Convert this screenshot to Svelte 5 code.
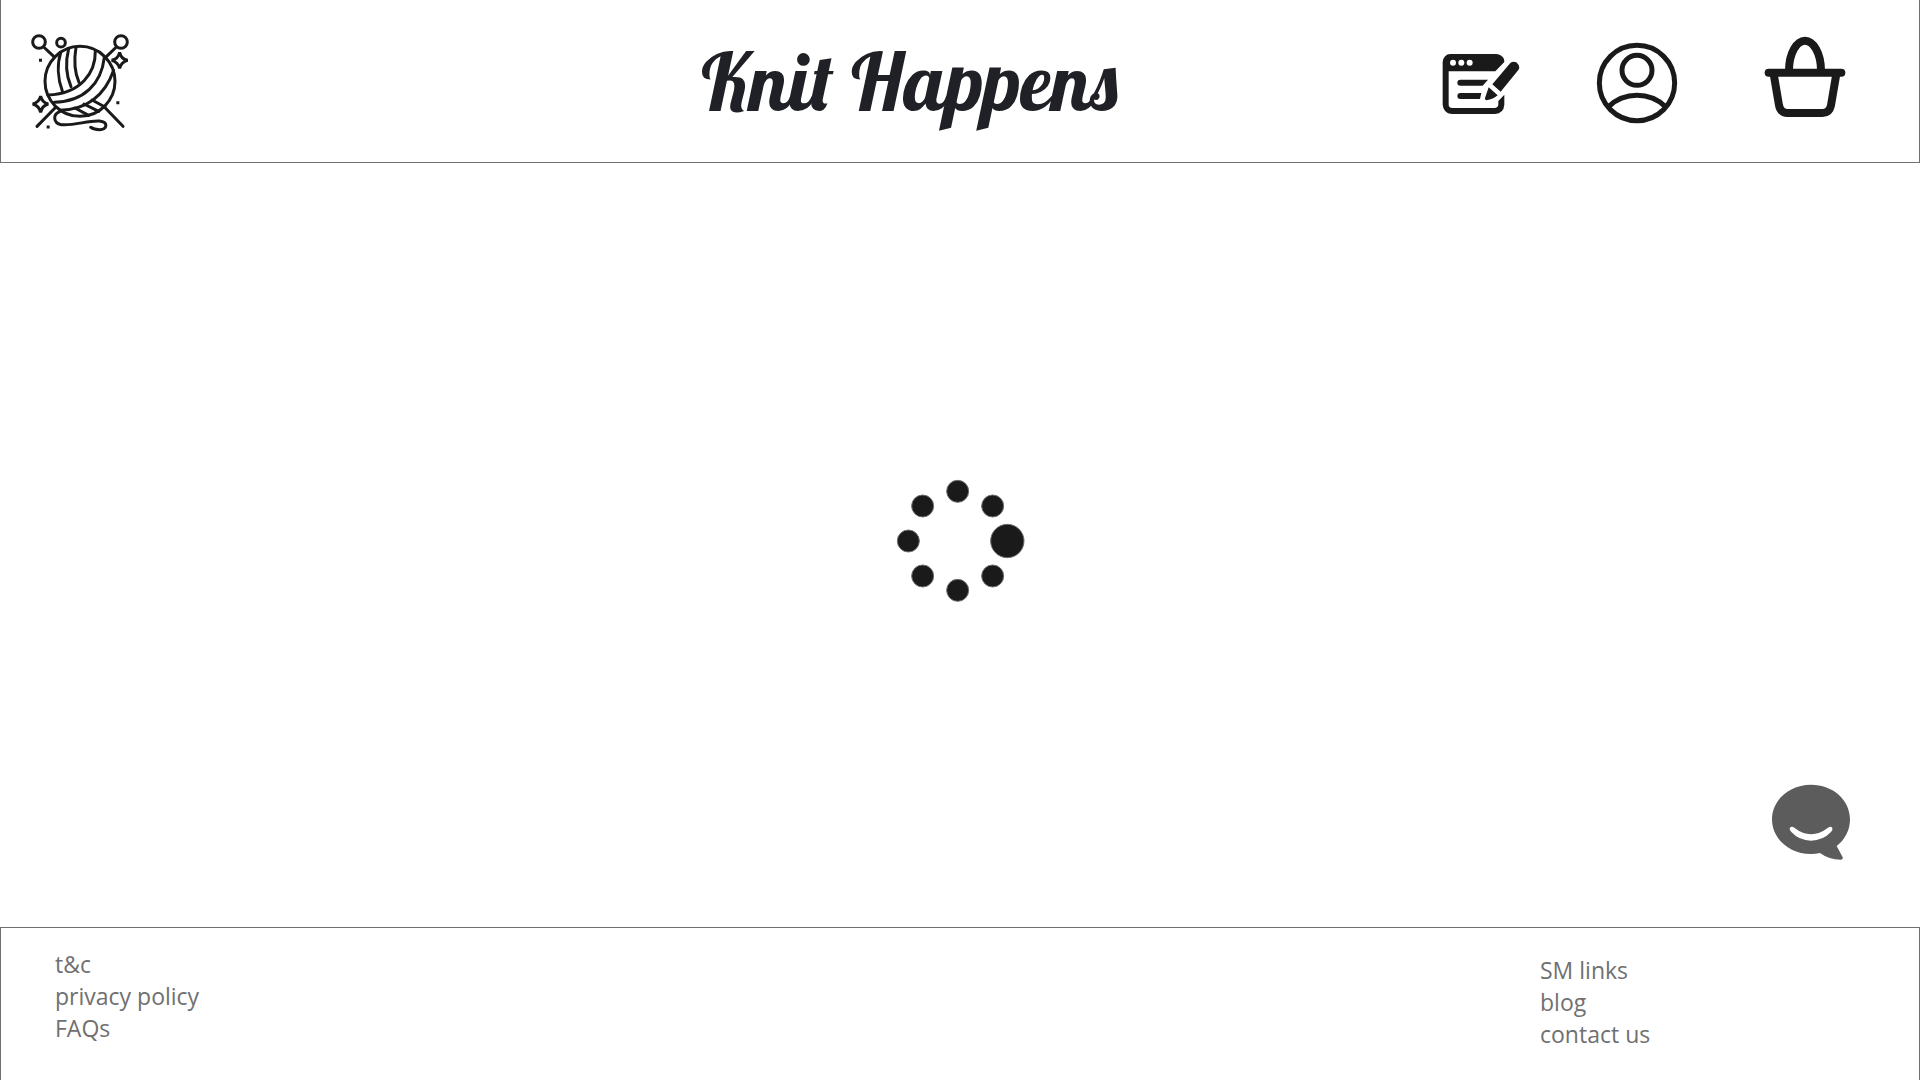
<script>
  const legal = ['t&c', 'privacy policy', 'FAQs'];
  const contact = ['SM links', 'blog', 'contact us'];
  const dots = [
    { x: 218, y: 64, r: 33 },
    { x: 323, y: 108, r: 33 },
    { x: 367, y: 213, r: 50 },
    { x: 323, y: 318, r: 33 },
    { x: 218, y: 361, r: 33 },
    { x: 113, y: 318, r: 33 },
    { x: 70, y: 213, r: 33 },
    { x: 113, y: 108, r: 33 }
  ];
</script>

<div class="page">
  <header>
    <a class="logo" href="#home" aria-label="Home">
      <svg viewBox="0 3 360 360" width="120" height="120" fill="none" stroke="#1a1a1a" stroke-width="9" stroke-linecap="round" stroke-linejoin="round">
        <circle cx="57" cy="66" r="19" />
        <circle cx="123" cy="68" r="13" />
        <circle cx="303" cy="66" r="19" />
        <path d="M71 81 L101 109 M289 81 L260 109" />
        <circle cx="180" cy="184" r="105" />
        <path d="M122 98 C111 132 113 176 127 213 M146 86 C136 126 139 168 153 200 M168 82 C161 124 164 158 177 187" />
        <path d="M226 92 C227 157 184 221 84 225 M253 112 C244 191 192 245 103 247 M281 151 C257 219 207 269 119 271" />
        <path d="M216 240 L255 261 M192 252 L236 274 M165 264 L206 286" />
        <path d="M105 264 L51 319 M256 264 L309 319" />
        <path d="M119 275 C98 283 99 309 124 314 C160 318 204 301 238 303 C266 306 262 329 239 329 Q222 329 212 322" />
        <path d="M299 97 Q303 117 323 121 Q303 126 299 145 Q294 126 275 121 Q294 117 299 97 Z M62 228 Q66 248 85 252 Q66 257 62 277 Q57 257 38 252 Q57 248 62 228 Z" stroke-linejoin="miter" />
        <path d="M57 121 H66 M289 248 H298 M80 321 H89" stroke-linecap="butt" />
      </svg>
    </a>

    <h1>Knit Happens</h1>

    <nav aria-label="Shop">
      <a href="#blog" aria-label="Blog">
        <svg viewBox="-15 -42 330 330" width="110" height="110">
          <path d="M61 42 H199 Q215 43 222 57 L223 66 L196 94 H56 V195 Q57 204 67 204 H195 Q205 203 205 193 V183 L223 164 V194 Q221 220 195 222 H65 Q40 219 38 194 V66 Q41 43 61 42 Z" fill="#1a1a1a" />
          <g fill="#fff"><circle cx="69" cy="68" r="9" /><circle cx="94" cy="68" r="9" /><circle cx="119" cy="68" r="9" /></g>
          <path d="M91 119 H174 L158 137 H91 A9 9 0 0 1 91 119 Z M91 159 H154 L150 177 H91 A9 9 0 0 1 91 159 Z M176 142 L203 166 Q190 178 169 181 Q164 180 165 174 Z M187 133 L241 69 Q249 62 259 67 L266 75 Q270 83 265 90 L212 155 Z" fill="#1a1a1a" />
        </svg>
      </a>
      <a href="#account" aria-label="Account">
        <svg viewBox="0 -12 330 330" width="110" height="110" fill="none" stroke="#1a1a1a" stroke-width="15">
          <circle cx="156" cy="159" r="113" />
          <circle cx="156" cy="121" r="45" />
          <path d="M71 230 Q106 196 156 196 Q206 196 241 230" />
        </svg>
      </a>
      <a href="#basket" aria-label="Basket">
        <svg viewBox="-30 3 330 330" width="110" height="110" fill="none" stroke="#1a1a1a" stroke-width="24" stroke-linecap="round">
          <path d="M41 143 H259" />
          <path d="M102 137 C102 85 125 47 150 47 C175 47 198 85 198 137" />
          <path d="M56 147 L72 241 Q77 264 98 264 H202 Q223 264 228 241 L244 147" />
        </svg>
      </a>
    </nav>
  </header>

  <main>
    <svg class="loader" role="img" aria-label="Loading" viewBox="0 15 450 420" width="150" height="140" fill="#1a1a1a" stroke="#707070" stroke-width="3">
      {#each dots as dot}
        <circle cx={dot.x} cy={dot.y} r={dot.r} />
      {/each}
    </svg>
    <button class="chat" type="button" aria-label="Open chat">
      <svg viewBox="0 0 330 300" width="110" height="100">
        <path d="M168 44 C234 44 285 90 285 148 C285 181 270 209 245 228 L263 262 Q265 269 257 269 Q222 269 195 249 Q181 252 168 252 C103 252 51 206 51 148 C51 90 103 44 168 44 Z" fill="#5c5c5c" />
        <path d="M118 173 Q168 212 219 173 Q227 167 232 173 Q234 179 228 186 Q203 212 168 212 Q133 212 109 186 Q102 178 105 173 Q110 167 118 173 Z" fill="#fff" />
      </svg>
    </button>
  </main>

  <footer>
    <ul>
      {#each legal as label}
        <li><a href="#legal">{label}</a></li>
      {/each}
    </ul>
    <ul class="contact">
      {#each contact as label}
        <li><a href="#contact">{label}</a></li>
      {/each}
    </ul>
  </footer>
</div>

<style>
  :global(body) {
    margin: 0;
    background: #fff;
  }

  .page {
    display: flex;
    flex-direction: column;
    min-height: 100vh;
    font-family: 'Segoe UI', 'Open Sans', 'Noto Sans', sans-serif;
    color: #707070;
  }

  header {
    display: grid;
    grid-template-columns: 393px 1fr 494px;
    align-items: center;
    min-height: 162px;
    border: solid #707070;
    border-width: 0 1px 1px;
  }

  svg {
    display: block;
  }

  .logo {
    justify-self: start;
    margin-left: 19px;
  }

  h1 {
    margin: 0;
    text-align: center;
    font-family: Lobster, 'Liberation Serif', serif;
    font-size: 80px;
    font-weight: 400;
    line-height: 96px;
    white-space: nowrap;
    color: #202126;
  }

  nav {
    display: flex;
    gap: 50px;
  }

  main {
    position: relative;
    display: flex;
    flex: 1;
    align-items: center;
    justify-content: center;
  }

  .chat {
    position: absolute;
    right: 55px;
    bottom: 57px;
    padding: 0;
    border: 0;
    background: none;
    cursor: pointer;
  }

  footer {
    display: grid;
    grid-template-columns: 1fr 379px;
    box-sizing: border-box;
    min-height: 153px;
    padding: 20px 0 0 54px;
    border: solid #707070;
    border-width: 1px 1px 0;
    font-size: 23px;
    line-height: 32px;
  }

  ul {
    margin: 0;
    padding: 0;
    list-style: none;
  }

  .contact {
    padding-top: 6px;
  }

  footer a {
    color: inherit;
    text-decoration: none;
  }
</style>
